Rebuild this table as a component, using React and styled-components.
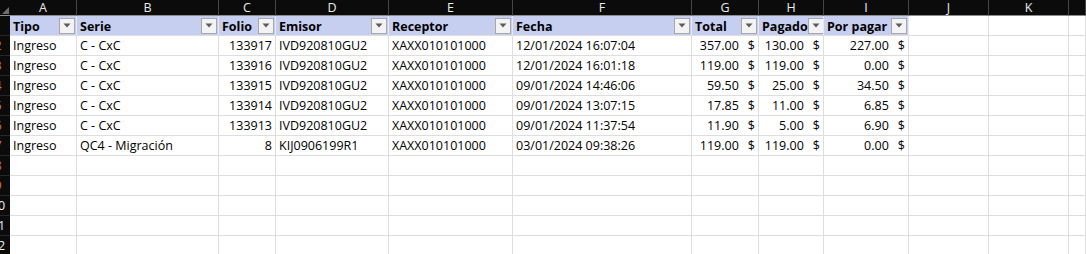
import { Fragment } from "react";
import styled, { createGlobalStyle } from "styled-components";

const GlobalStyle = createGlobalStyle`
  html, body {
    margin: 0;
    padding: 0;
    background: #ffffff;
    overflow: hidden;
  }
  body {
    font-family: "Open Sans", "Liberation Sans", sans-serif;
  }
`;

const COLS = [67, 142, 57, 113, 124, 179, 67, 65, 85, 80, 80];
const LETTERS = ["A", "B", "C", "D", "E", "F", "G", "H", "I", "J", "K", ""];

const Sheet = styled.div`
  display: grid;
  grid-template-columns: 10px ${COLS.map((w) => `${w}px`).join(" ")} 1fr;
  grid-auto-rows: 20px;
  grid-template-rows: 16px;
  width: 1086px;
  height: 254px;
  overflow: hidden;
  font-size: 12.5px;
  color: #000000;
`;

const Corner = styled.div`
  background: #0b0b0b;
  border-bottom: 1px solid #8c8c8c;
  box-sizing: border-box;
  overflow: hidden;
`;

const ColHead = styled.div`
  background: #0b0b0b;
  color: #ececec;
  box-sizing: border-box;
  border-right: 1px solid #454545;
  border-bottom: 1px solid #8c8c8c;
  display: flex;
  align-items: center;
  justify-content: center;
  font-size: 12.5px;
  line-height: 15px;
`;

/* row header is scrolled: only the right edge of the numbers shows */
const RowHead = styled.div`
  background: #0b0b0b;
  box-sizing: border-box;
  border-bottom: 1px solid #262626;
  overflow: hidden;
  display: flex;
  align-items: flex-end;
`;

const RowNum = styled.span`
  flex: none;
  width: 20px;
  margin-left: -12px;
  text-align: center;
  line-height: 18px;
  font-size: 12.5px;
  color: ${(p) => (p.$active ? "#d6782c" : "#f0f0f0")};
`;

const Cell = styled.div`
  box-sizing: border-box;
  border-bottom: 1px solid #dedede;
  border-right: 1px solid ${(p) => (p.$head ? "#e4e8f8" : "#dedede")};
  background: ${(p) => (p.$head ? "#c7cff1" : "#ffffff")};
  font-weight: ${(p) => (p.$head ? 700 : 400)};
  display: flex;
  align-items: flex-end;
  justify-content: ${(p) => (p.$right ? "flex-end" : "flex-start")};
  padding: ${(p) => (p.$head ? "0 0 0 3px" : "0 3px 1px 3px")};
  white-space: nowrap;
  overflow: hidden;
  line-height: 17px;
`;

const HeadInner = styled.div`
  flex: 1;
  height: 100%;
  display: flex;
  align-items: center;
  justify-content: space-between;
  min-width: 0;
`;

const HeadLabel = styled.span`
  padding-top: 1px;
`;

const FilterBtn = styled.span`
  flex: none;
  box-sizing: border-box;
  width: 16px;
  height: 16px;
  margin-right: 1px;
  border: 1px solid #a8a8a8;
  background: #f3f3f3;
  display: flex;
  align-items: center;
  justify-content: center;
`;

const Money = styled.div`
  flex: 1;
  display: flex;
  justify-content: flex-end;
  gap: 9px;
`;

const Filter = () => (
  <FilterBtn>
    <svg width="8" height="5" viewBox="0 0 8 5">
      <path d="M0.5 0.5 L7.5 0.5 L4 4.5 Z" fill="#5c5c5c" />
    </svg>
  </FilterBtn>
);

const headers = ["Tipo", "Serie", "Folio", "Emisor", "Receptor", "Fecha", "Total", "Pagado", "Por pagar"];

const rows = [
  ["Ingreso", "C - CxC", "133917", "IVD920810GU2", "XAXX010101000", "12/01/2024 16:07:04", "357.00", "130.00", "227.00"],
  ["Ingreso", "C - CxC", "133916", "IVD920810GU2", "XAXX010101000", "12/01/2024 16:01:18", "119.00", "119.00", "0.00"],
  ["Ingreso", "C - CxC", "133915", "IVD920810GU2", "XAXX010101000", "09/01/2024 14:46:06", "59.50", "25.00", "34.50"],
  ["Ingreso", "C - CxC", "133914", "IVD920810GU2", "XAXX010101000", "09/01/2024 13:07:15", "17.85", "11.00", "6.85"],
  ["Ingreso", "C - CxC", "133913", "IVD920810GU2", "XAXX010101000", "09/01/2024 11:37:54", "11.90", "5.00", "6.90"],
  ["Ingreso", "QC4 - Migración", "8", "KIJ0906199R1", "XAXX010101000", "03/01/2024 09:38:26", "119.00", "119.00", "0.00"],
];

const EMPTY_ROWS = 6;

export default function App() {
  return (
    <>
      <GlobalStyle />
      <Sheet>
        <Corner>
          <svg width="10" height="16" viewBox="0 0 10 16" style={{ display: "block" }}>
            <path d="M9 7 L9 14 L2 14 Z" fill="#6e6e6e" />
          </svg>
        </Corner>
        {LETTERS.map((l, i) => (
          <ColHead key={i}>{l}</ColHead>
        ))}

        <RowHead>
          <RowNum $active>1</RowNum>
        </RowHead>
        {headers.map((h) => (
          <Cell key={h} $head>
            <HeadInner>
              <HeadLabel>{h}</HeadLabel>
              <Filter />
            </HeadInner>
          </Cell>
        ))}
        <Cell />
        <Cell />
        <Cell />

        {rows.map((r, ri) => (
          <Fragment key={`r${ri}`}>
            <RowHead>
              <RowNum $active>{ri + 2}</RowNum>
            </RowHead>
            {r.map((v, ci) =>
              ci >= 6 ? (
                <Cell key={ci}>
                  <Money>
                    <span>{v}</span>
                    <span>$</span>
                  </Money>
                </Cell>
              ) : (
                <Cell key={ci} $right={ci === 2}>
                  {v}
                </Cell>
              )
            )}
            <Cell />
            <Cell />
            <Cell />
          </Fragment>
        ))}

        {Array.from({ length: EMPTY_ROWS }).map((_, ri) => (
          <Fragment key={`e${ri}`}>
            <RowHead>
              <RowNum $active={ri + 8 < 10}>{ri + 8}</RowNum>
            </RowHead>
            {Array.from({ length: 12 }).map((__, ci) => (
              <Cell key={ci} />
            ))}
          </Fragment>
        ))}
      </Sheet>
    </>
  );
}
